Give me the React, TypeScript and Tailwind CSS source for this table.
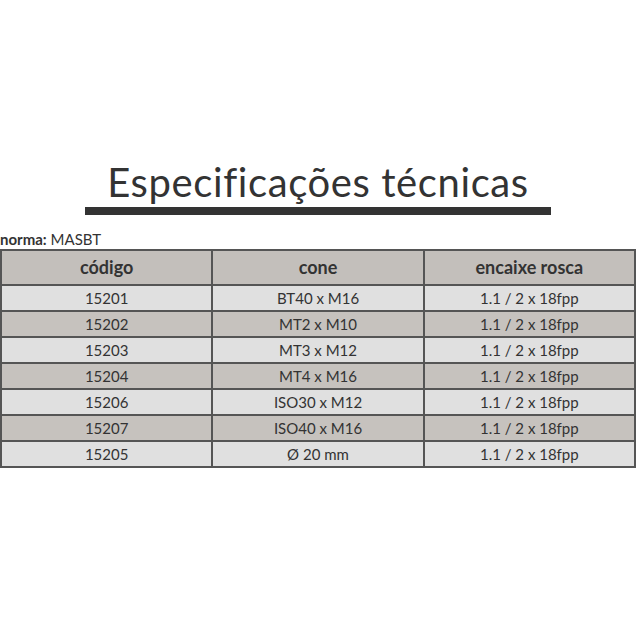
const rows = [
  ["15201", "BT40 x M16", "1.1 / 2 x 18fpp"],
  ["15202", "MT2 x M10", "1.1 / 2 x 18fpp"],
  ["15203", "MT3 x M12", "1.1 / 2 x 18fpp"],
  ["15204", "MT4 x M16", "1.1 / 2 x 18fpp"],
  ["15206", "ISO30 x M12", "1.1 / 2 x 18fpp"],
  ["15207", "ISO40 x M16", "1.1 / 2 x 18fpp"],
  ["15205", "Ø 20 mm", "1.1 / 2 x 18fpp"],
]

export default function App() {
  return (
    <div className="w-[636px] h-[636px] bg-white text-[#333] font-['Lato',sans-serif]">
      <div className="pt-[160px] flex flex-col items-center">
        <h1 className="text-[40px] leading-[44px] tracking-[0.6px] font-normal">Especificações técnicas</h1>
        <div className="mt-[3px] w-[466px] h-[8px] bg-[#333]" />
      </div>
      <div className="mt-[15px] text-[15px] leading-[19px]">
        <span className="font-bold">norma:</span> MASBT
      </div>
      <table className="w-[636px] border-collapse table-fixed text-[15px]">
        <thead>
          <tr className="bg-[#c3bfbb] h-[35px]">
            {["código", "cone", "encaixe rosca"].map((h) => (
              <th key={h} className="border-2 border-[#555] font-bold text-[18px]">{h}</th>
            ))}
          </tr>
        </thead>
        <tbody>
          {rows.map((r, i) => (
            <tr key={r[0]} className={`h-[26px] ${i % 2 === 0 ? "bg-[#e0e0e0]" : "bg-[#c6c2be]"}`}>
              {r.map((c, j) => (
                <td key={j} className="border-2 border-[#555] text-center leading-[22px]">{c}</td>
              ))}
            </tr>
          ))}
        </tbody>
      </table>
    </div>
  )
}
